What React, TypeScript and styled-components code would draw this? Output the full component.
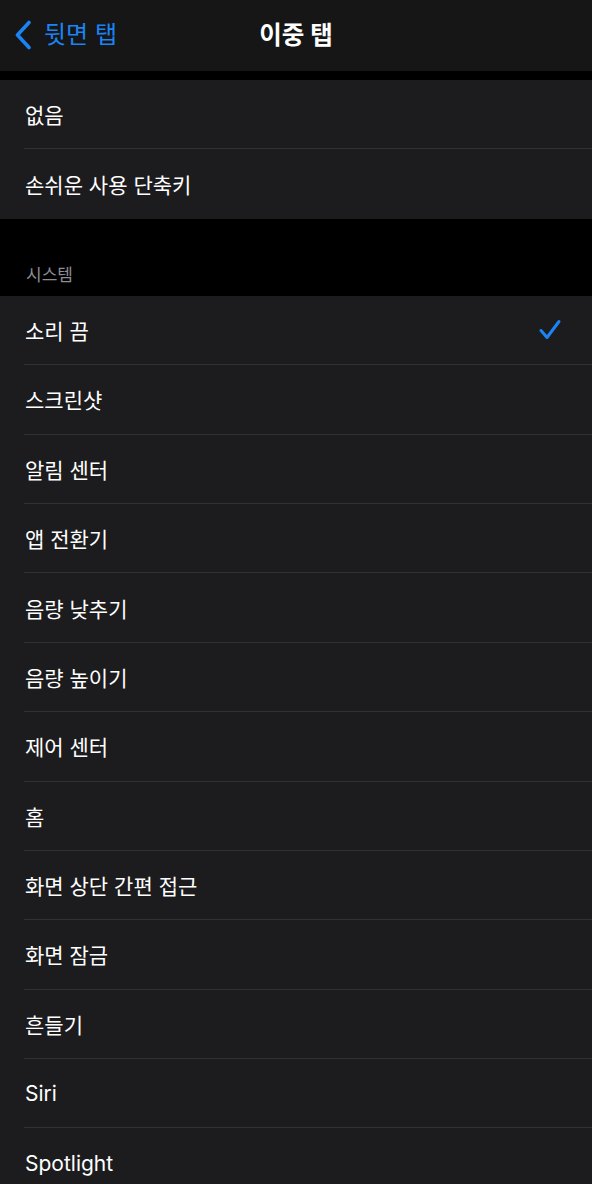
import React from 'react'
import styled, { createGlobalStyle } from 'styled-components'

const colors = {
    page: '#000000',
    bar: '#161616',
    cell: '#1c1c1e',
    line: '#313133',
    text: '#ffffff',
    muted: '#8d8d92',
    blue: '#1a84f4',
}

const GlobalStyle = createGlobalStyle`
    html, body {
        margin: 0;
        padding: 0;
        background: ${colors.page};
    }
    body {
        font-family: "Inter", "Noto Sans CJK KR", sans-serif;
        color: ${colors.text};
        -webkit-font-smoothing: antialiased;
    }
`

const Screen = styled.div`
    width: 592px;
    min-height: 1184px;
    overflow: hidden;
    background: ${colors.page};
`

const NavBar = styled.header`
    position: relative;
    height: 71px;
    display: flex;
    align-items: center;
    justify-content: center;
    background: ${colors.bar};
`

const BackButton = styled.button`
    position: absolute;
    left: 14px;
    top: 19px;
    display: flex;
    align-items: center;
    gap: 12px;
    padding: 0;
    border: 0;
    background: none;
    color: ${colors.blue};
    font-family: inherit;
    font-size: 24px;
    line-height: 32px;
    cursor: pointer;
`

const Title = styled.h1`
    margin: 0 0 2px 0;
    font-size: 24.5px;
    font-weight: 700;
    line-height: 30px;
    color: ${colors.text};
`

const Group = styled.section<{ $gap: number }>`
    margin-top: ${p => p.$gap}px;
    background: ${colors.cell};
`

const SectionLabel = styled.div`
    height: 77px;
    box-sizing: border-box;
    display: flex;
    align-items: flex-end;
    padding: 0 0 11px 26px;
    font-size: 17px;
    line-height: 20px;
    color: ${colors.muted};
`

const Row = styled.div`
    padding-left: 24px;
`

const RowInner = styled.div<{ $last: boolean }>`
    height: 69.4px;
    box-sizing: border-box;
    display: flex;
    align-items: center;
    justify-content: space-between;
    padding-left: 1px;
    padding-right: 30px;
    border-bottom: ${p => (p.$last ? '0' : `1px solid ${colors.line}`)};
    font-size: 21px;
    color: ${colors.text};
`

const Chevron = () => (
    <svg width="18" height="30" viewBox="0 0 18 30" fill="none">
        <path d="M15 2.5 L3.5 15 L15 27.5" stroke={colors.blue} strokeWidth="3.6" strokeLinecap="round" strokeLinejoin="round" />
    </svg>
)

const Check = () => (
    <svg width="24" height="22" viewBox="0 0 24 22" fill="none">
        <path d="M3 11.5 L9 18.5 L21 2.5" stroke={colors.blue} strokeWidth="3" strokeLinecap="round" strokeLinejoin="round" />
    </svg>
)

const topItems = ['없음', '손쉬운 사용 단축키']

const systemItems = [
    '소리 끔',
    '스크린샷',
    '알림 센터',
    '앱 전환기',
    '음량 낮추기',
    '음량 높이기',
    '제어 센터',
    '홈',
    '화면 상단 간편 접근',
    '화면 잠금',
    '흔들기',
    'Siri',
    'Spotlight',
]

const selected = '소리 끔'

const App: React.FC = () => {
    return (
        <Screen>
            <GlobalStyle />
            <NavBar>
                <BackButton>
                    <Chevron />
                    <span>뒷면 탭</span>
                </BackButton>
                <Title>이중 탭</Title>
            </NavBar>

            <Group $gap={9}>
                {topItems.map((item, i) => (
                    <Row key={item}>
                        <RowInner $last={i === topItems.length - 1}>
                            <span>{item}</span>
                        </RowInner>
                    </Row>
                ))}
            </Group>

            <SectionLabel>시스템</SectionLabel>

            <Group $gap={0}>
                {systemItems.map((item, i) => (
                    <Row key={item}>
                        <RowInner $last={i === systemItems.length - 1}>
                            <span>{item}</span>
                            {item === selected && <Check />}
                        </RowInner>
                    </Row>
                ))}
            </Group>
        </Screen>
    )
}

export default App
